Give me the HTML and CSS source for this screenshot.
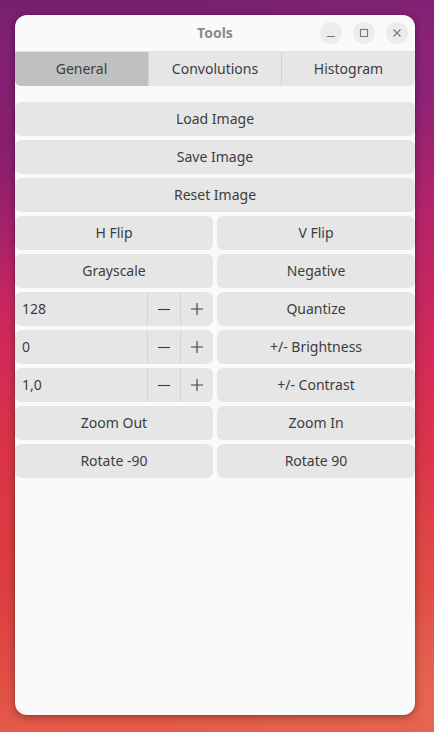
FILE: index.html
```html
<!DOCTYPE html>
<html>
<head>
<meta charset="utf-8">
<link rel="stylesheet" href="styles.css">
</head>
<body>
<div class="desktop">
  <div class="window">
    <header class="titlebar">
      <span class="title">Tools</span>
      <div class="controls">
        <span class="wbtn"><svg width="22" height="22" viewBox="0 0 22 22"><path d="M7 14.5h8" stroke="#7a7a7a" stroke-width="1.2"/></svg></span>
        <span class="wbtn"><svg width="22" height="22" viewBox="0 0 22 22"><rect x="7.5" y="7.5" width="7" height="7" fill="none" stroke="#7a7a7a" stroke-width="1.1"/></svg></span>
        <span class="wbtn"><svg width="22" height="22" viewBox="0 0 22 22"><path d="M7.5 7.5l7 7M14.5 7.5l-7 7" stroke="#7a7a7a" stroke-width="1.2"/></svg></span>
      </div>
    </header>
    <nav class="tabs">
      <div class="tab active">General</div>
      <div class="tab">Convolutions</div>
      <div class="tab">Histogram</div>
    </nav>
    <main class="content">
      <div class="btn full">Load Image</div>
      <div class="btn full">Save Image</div>
      <div class="btn full">Reset Image</div>
      <div class="btn">H Flip</div>
      <div class="btn">V Flip</div>
      <div class="btn">Grayscale</div>
      <div class="btn">Negative</div>
      <div class="spin"><span class="value">128</span><span class="sb"><svg width="14" height="14" viewBox="0 0 14 14"><path d="M1 7.5h12" stroke="#3d3d3d" stroke-width="1.1"/></svg></span><span class="sb"><svg width="14" height="14" viewBox="0 0 14 14"><path d="M1 7h12M7 1v12" stroke="#3d3d3d" stroke-width="1.1"/></svg></span></div>
      <div class="btn">Quantize</div>
      <div class="spin"><span class="value">0</span><span class="sb"><svg width="14" height="14" viewBox="0 0 14 14"><path d="M1 7.5h12" stroke="#3d3d3d" stroke-width="1.1"/></svg></span><span class="sb"><svg width="14" height="14" viewBox="0 0 14 14"><path d="M1 7h12M7 1v12" stroke="#3d3d3d" stroke-width="1.1"/></svg></span></div>
      <div class="btn">+/- Brightness</div>
      <div class="spin"><span class="value">1,0</span><span class="sb"><svg width="14" height="14" viewBox="0 0 14 14"><path d="M1 7.5h12" stroke="#3d3d3d" stroke-width="1.1"/></svg></span><span class="sb"><svg width="14" height="14" viewBox="0 0 14 14"><path d="M1 7h12M7 1v12" stroke="#3d3d3d" stroke-width="1.1"/></svg></span></div>
      <div class="btn">+/- Contrast</div>
      <div class="btn">Zoom Out</div>
      <div class="btn">Zoom In</div>
      <div class="btn">Rotate -90</div>
      <div class="btn">Rotate 90</div>
    </main>
  </div>
</div>
</body>
</html>
```
FILE: styles.css
```css
html, body {
  margin: 0;
  padding: 0;
  width: 434px;
  height: 732px;
  overflow: hidden;
}
.desktop {
  width: 434px;
  height: 732px;
  padding: 15px;
  box-sizing: border-box;
  font-family: "Noto Sans", sans-serif;
  background:
    radial-gradient(ellipse 420px 160px at 470px 40px, rgba(150,36,125,0.55), rgba(150,36,125,0) 70%),
    radial-gradient(ellipse 600px 200px at -60px 160px, rgba(120,28,110,0.6), rgba(120,28,110,0) 70%),
    radial-gradient(ellipse 300px 260px at -40px 560px, rgba(214,48,60,0.6), rgba(214,48,60,0) 70%),
    radial-gradient(ellipse 500px 160px at 500px 700px, rgba(232,110,85,0.7), rgba(232,110,85,0) 70%),
    linear-gradient(180deg, #77206f 0%, #8a2275 12%, #b8236a 30%, #d12a58 48%, #db3548 62%, #e04a44 78%, #e45c4a 100%);
}
.window {
  width: 400px;
  height: 700px;
  background: #fafafa;
  border-radius: 12px;
  overflow: hidden;
  box-shadow: 0 2px 8px rgba(0,0,0,0.35), 0 0 0 1px rgba(0,0,0,0.06);
  display: flex;
  flex-direction: column;
}
.titlebar {
  height: 36px;
  flex: none;
  display: grid;
  grid-template-columns: 1fr auto 1fr;
  align-items: center;
  border-bottom: 1px solid #e2e2e2;
}
.title {
  grid-column: 2;
  font-weight: bold;
  font-size: 14px;
  color: #8a8a8a;
  padding-bottom: 1px;
}
.controls {
  grid-column: 3;
  justify-self: end;
  display: flex;
  gap: 11px;
  padding-right: 7px;
  padding-bottom: 1px;
}
.wbtn {
  width: 22px;
  height: 22px;
  border-radius: 50%;
  background: #ececec;
  display: block;
}
.wbtn svg { display: block; }
.tabs {
  height: 34px;
  flex: none;
  display: grid;
  grid-template-columns: 133px 133px 134px;
  background: #e6e6e6;
  border-radius: 0 0 6px 6px;
  overflow: hidden;
}
.tab {
  display: flex;
  align-items: center;
  justify-content: center;
  font-size: 14px;
  color: #3d3d3d;
  border-left: 1px solid #d4d4d4;
  padding-bottom: 2px;
}
.tab:first-child { border-left: none; }
.tab.active { background: #c0c0c0; }
.content {
  padding-top: 16px;
  display: grid;
  grid-template-columns: 1fr 1fr;
  grid-auto-rows: 34px;
  gap: 4px;
}
.btn {
  background: #e6e6e6;
  border-radius: 6px;
  display: flex;
  align-items: center;
  justify-content: center;
  font-size: 14px;
  color: #3d3d3d;
  padding-bottom: 2px;
}
.btn.full { grid-column: 1 / span 2; }
.spin {
  background: #e6e6e6;
  border-radius: 6px;
  display: grid;
  grid-template-columns: 1fr 33px 33px;
  font-size: 14px;
  color: #3d3d3d;
}
.value {
  display: flex;
  align-items: center;
  padding-left: 7px;
  padding-bottom: 2px;
}
.sb {
  display: flex;
  align-items: center;
  justify-content: center;
  border-left: 1px solid #d4d4d4;
}
.sb svg { display: block; }
```
